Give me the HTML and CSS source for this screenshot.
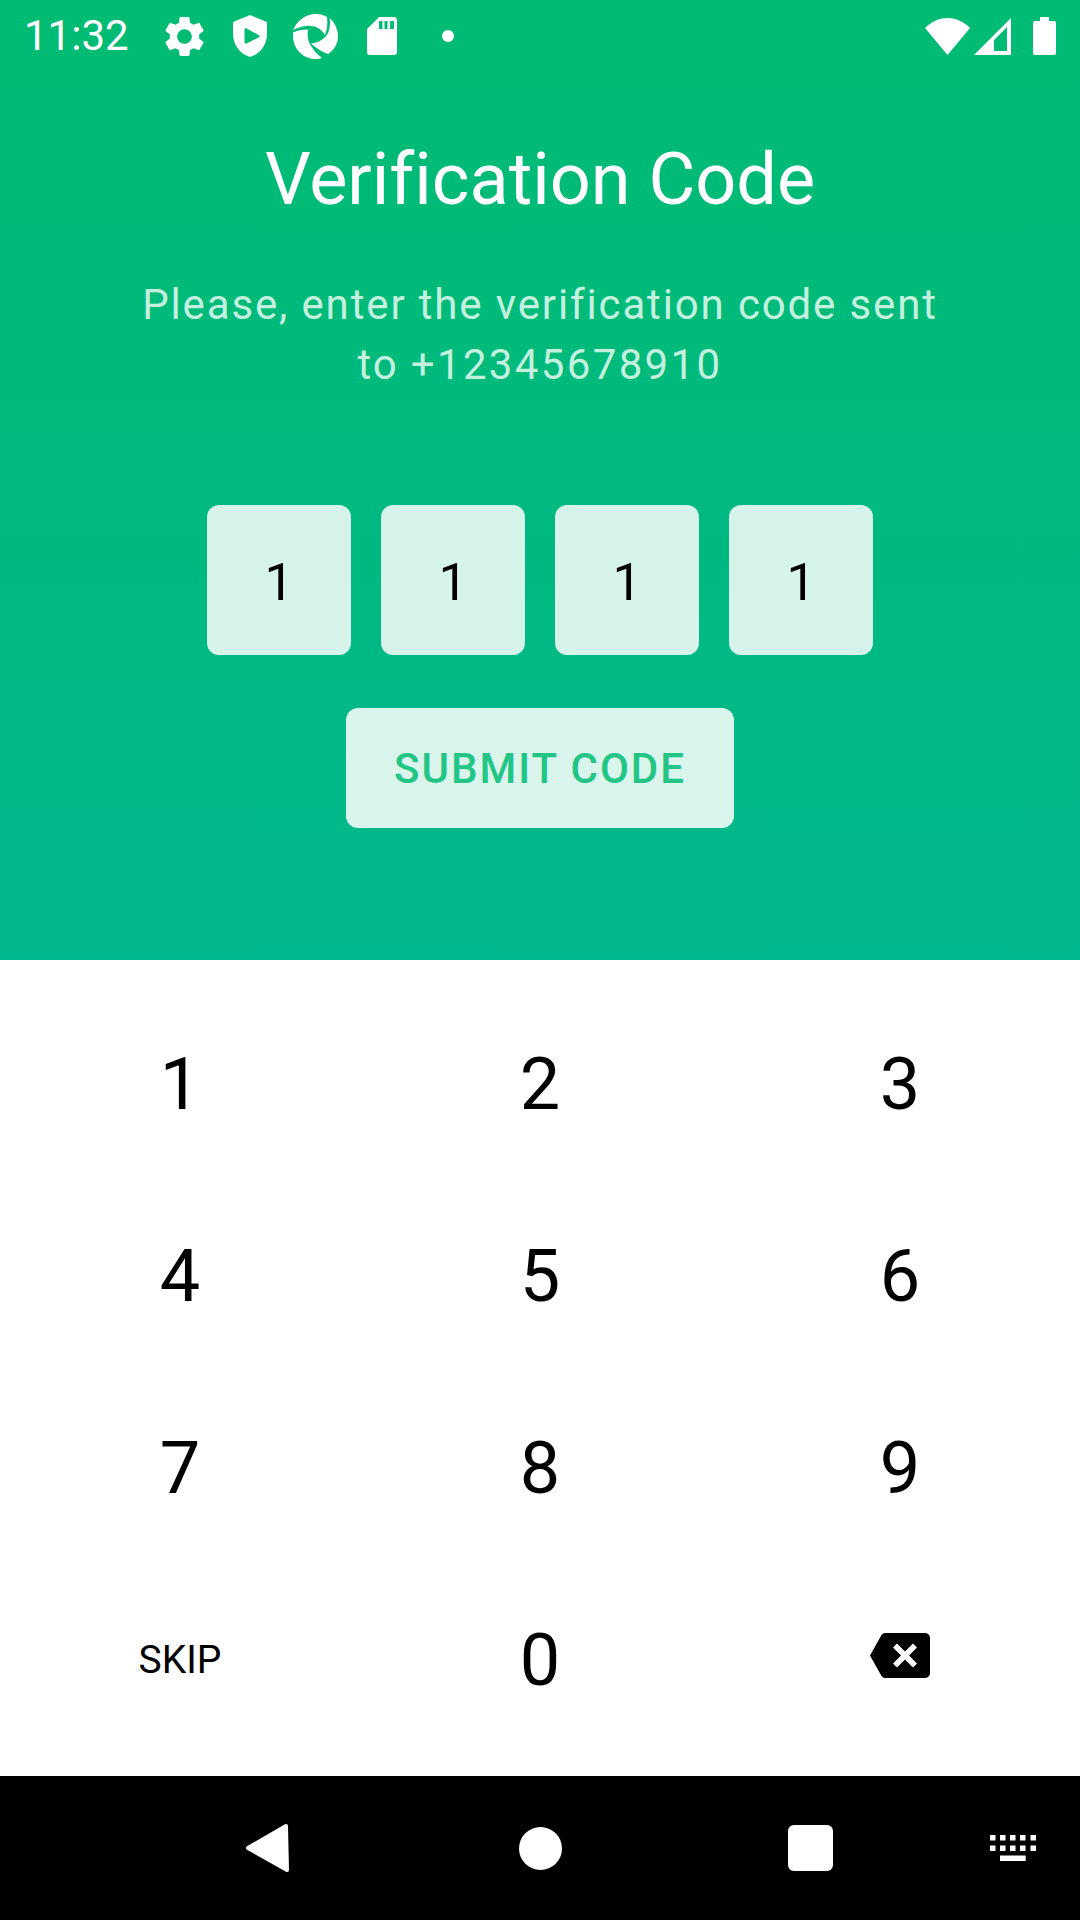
FILE: index.html
```html
<!DOCTYPE html>
<html lang="en">
<head>
<meta charset="utf-8">
<title>Verification Code</title>
<link rel="stylesheet" href="styles.css">
</head>
<body>
<div class="screen">
  <section class="hero">
    <header class="status">
      <span class="time">11:32</span>
      <svg class="ic gear" viewBox="0 0 24 24"><path fill="#fff" d="M19.14 12.94c.04-.3.06-.61.06-.94 0-.32-.02-.64-.07-.94l2.03-1.58c.18-.14.23-.41.12-.61l-1.92-3.32c-.12-.22-.37-.29-.59-.22l-2.39.96c-.5-.38-1.03-.7-1.62-.94l-.36-2.54c-.04-.24-.24-.41-.48-.41h-3.84c-.24 0-.43.17-.47.41l-.36 2.54c-.59.24-1.13.57-1.62.94l-2.39-.96c-.22-.08-.47 0-.59.22L2.74 8.87c-.12.21-.08.47.12.61l2.03 1.58c-.05.3-.09.63-.09.94s.02.64.07.94l-2.03 1.58c-.18.14-.23.41-.12.61l1.92 3.32c.12.22.37.29.59.22l2.39-.96c.5.38 1.03.7 1.62.94l.36 2.54c.05.24.24.41.48.41h3.84c.24 0 .44-.17.47-.41l.36-2.54c.59-.24 1.13-.56 1.62-.94l2.39.96c.22.08.47 0 .59-.22l1.92-3.32c.12-.22.07-.47-.12-.61l-2.01-1.58zM12 15.6c-1.98 0-3.6-1.62-3.6-3.6s1.62-3.6 3.6-3.6 3.6 1.62 3.6 3.6-1.62 3.6-3.6 3.6z"/></svg>
      <svg class="ic shield" viewBox="0 0 34 42"><path fill="#fff" fill-rule="evenodd" d="M17 0 L34 7 V19 C34 30 27 39 17 42 C7 39 0 30 0 19 V7 Z M11.500 14.500 V27 C11.500 28.300 12.500 29 13.700 28.400 L26 22.300 C27 21.800 27 20.800 26 20.300 L13.700 13.500 C12.500 12.900 11.500 13.500 11.500 14.500 Z"/></svg>
      <svg class="ic swirl" viewBox="0 0 45 45"><g fill="#fff"><path d="M0 16 C4 7 12 0 23 0 C27 0 31 1 34 3 C35 10 34 16 32 21 C28 14 20 11 13 12 C8 12.500 4 14 0 16Z"/><path d="M36.500 4 C41.500 8 45 15 45 22.500 C45 30 41 36 35 40 C29 38 23 34 18 29.500 C26 29 33 24 35.500 18 C37 13 37.500 8 36.500 4Z"/><path d="M0 18.500 C4 16.500 9 15.500 15 15.500 C14 21 15 28 18 32 C21 37 25 41 29 44 C26 45 23 45 21 45 C9 44 0 34 0 22Z"/></g></svg>
      <svg class="ic sd" viewBox="0 0 30 38"><path fill="#fff" fill-rule="evenodd" d="M12 0 H27 C28.700 0 30 1.300 30 3 V35 C30 36.700 28.700 38 27 38 H3 C1.300 38 0 36.700 0 35 V12 Z M12 4 V12 H15.500 V4 Z M17.500 4 V12 H20.500 V4 Z M23 4 V12 H27 V4 Z"/></svg>
      <span class="dot"></span>
      <span class="spacer"></span>
      <svg class="ic wifi" viewBox="0 0 45 37"><path fill="#fff" d="M0 10 C6 4 14 0 22.500 0 C31 0 39 4 45 10 L22.500 37 Z"/></svg>
      <svg class="ic signal" viewBox="0 0 38 37"><path fill="#fff" fill-rule="evenodd" d="M37 0 V37 H0 Z M33 9 L20 22 V33 H33 Z"/></svg>
      <svg class="ic battery" viewBox="0 0 23 38"><path fill="#fff" d="M7 0 H16 V4 H21 C22.200 4 23 4.800 23 6 V36 C23 37.200 22.200 38 21 38 H2 C.8 38 0 37.200 0 36 V6 C0 4.800 .8 4 2 4 H7 Z"/></svg>
    </header>
    <h1 class="title">Verification Code</h1>
    <p class="lead">Please, enter the verification code sent<br>to <span class="phone">+12345678910</span></p>
    <div class="code">
      <div class="cell">1</div>
      <div class="cell">1</div>
      <div class="cell">1</div>
      <div class="cell">1</div>
    </div>
    <div class="submit">SUBMIT CODE</div>
  </section>
  <section class="pad">
    <div class="key">1</div><div class="key">2</div><div class="key">3</div>
    <div class="key">4</div><div class="key">5</div><div class="key">6</div>
    <div class="key">7</div><div class="key">8</div><div class="key">9</div>
    <div class="key skip">SKIP</div><div class="key">0</div>
    <div class="key"><svg class="del" viewBox="0 0 60 45"><path fill="#000" fill-rule="evenodd" d="M15 0 H55 C57.800 0 60 2.200 60 5 V40 C60 42.800 57.800 45 55 45 H15 C13.500 45 12.500 44.300 11.500 43 L0 22.500 L11.500 2 C12.500 .7 13.500 0 15 0 Z M27 10.500 L23 14.500 L31 22.500 L23 30.500 L27 34.500 L35 26.500 L43 34.500 L47 30.500 L39 22.500 L47 14.500 L43 10.500 L35 18.500 Z"/></svg></div>
  </section>
  <nav class="nav">
    <svg class="back" viewBox="0 0 44 50"><path fill="#fff" stroke="#fff" stroke-width="4" stroke-linejoin="round" d="M40 3 L41 47 L2 25 Z"/></svg>
    <span class="home"></span>
    <span class="recent"></span>
    <svg class="kbd" viewBox="0 0 46 26"><path fill="#fff" d="M0 0h5.500v5.500h-5.500zM10 0h5.500v5.500h-5.500zM20 0h5.500v5.500h-5.500zM30 0h5.500v5.500h-5.500zM40.500 0h5.500v5.500h-5.500zM0 10.500h5.500v5.500h-5.500zM10 10.500h5.500v5.500h-5.500zM20 10.500h5.500v5.500h-5.500zM30 10.500h5.500v5.500h-5.500zM40.500 10.500h5.500v5.500h-5.500zM10 20.500h25.700v5.500h-25.700z"/></svg>
  </nav>
</div>
</body>
</html>
```
FILE: styles.css
```css
* { box-sizing: border-box; }
html, body { margin: 0; padding: 0; }
body { width: 1080px; height: 1920px; font-family: Roboto, sans-serif; font-variant-ligatures: none; overflow: hidden; background: #fff; }
.screen { display: flex; flex-direction: column; height: 1920px; }

.hero {
  height: 960px;
  background: linear-gradient(180deg, #00bb72 0%, #00b88d 100%);
  color: #fff;
  display: flex;
  flex-direction: column;
  align-items: center;
}
.status { width: 100%; height: 72px; display: flex; align-items: center; padding: 0 24px 0 24px; }
.time { font-size: 42px; font-weight: 400; color: #fff; width: 104px; line-height: 72px; }
.ic { display: block; flex: none; }
.gear { width: 49px; height: 49px; margin-left: 32px; }
.shield { width: 34px; height: 42px; margin-left: 24px; }
.swirl { width: 45px; height: 45px; margin-left: 26px; }
.sd { width: 30px; height: 38px; margin-left: 29px; }
.dot { width: 12px; height: 12px; border-radius: 50%; background: #fff; margin-left: 45px; }
.spacer { flex: 1; }
.wifi { width: 45px; height: 37px; }
.signal { width: 38px; height: 37px; margin-left: 4px; }
.battery { width: 23px; height: 38px; margin-left: 21px; }

.title { margin: 66px 0 0; font-size: 72px; font-weight: 400; line-height: 84px; }
.lead {
  margin: 53px 0 0;
  font-size: 42px;
  line-height: 60px;
  letter-spacing: 1.86px;
  font-weight: 400;
  text-align: center;
  color: #c4f0de;
}
.phone { letter-spacing: 2.35px; }
.code { display: flex; gap: 30px; margin-top: 110px; }
.cell {
  width: 144px; height: 150px;
  padding-top: 4px;
  border-radius: 12px;
  background: #d7f4ea;
  color: #000;
  font-size: 52px;
  display: flex; align-items: center; justify-content: center;
}
.submit {
  margin-top: 53px;
  width: 388px; height: 120px;
  border-radius: 12px;
  background: #d9f5ec;
  color: #22c585;
  font-size: 42px;
  font-weight: 500;
  letter-spacing: 2px;
  display: flex; align-items: center; justify-content: center;
}

.pad {
  height: 816px;
  padding-top: 28px;
  display: grid;
  grid-template-columns: repeat(3, 360px);
  grid-auto-rows: 192px;
}
.key { display: flex; align-items: center; justify-content: center; font-size: 72px; color: #000; }
.skip { font-size: 39px; }
.del { width: 60px; height: 45px; display: block; margin-bottom: 9px; }

.nav { height: 144px; background: #000; display: flex; align-items: center; }
.back { width: 44px; height: 50px; margin-left: 246px; }
.home { width: 43px; height: 43px; border-radius: 50%; background: #fff; margin-left: 229px; }
.recent { width: 45px; height: 46px; border-radius: 6px; background: #fff; margin-left: 226px; }
.kbd { width: 46px; height: 26px; margin-left: 157px; }
```
